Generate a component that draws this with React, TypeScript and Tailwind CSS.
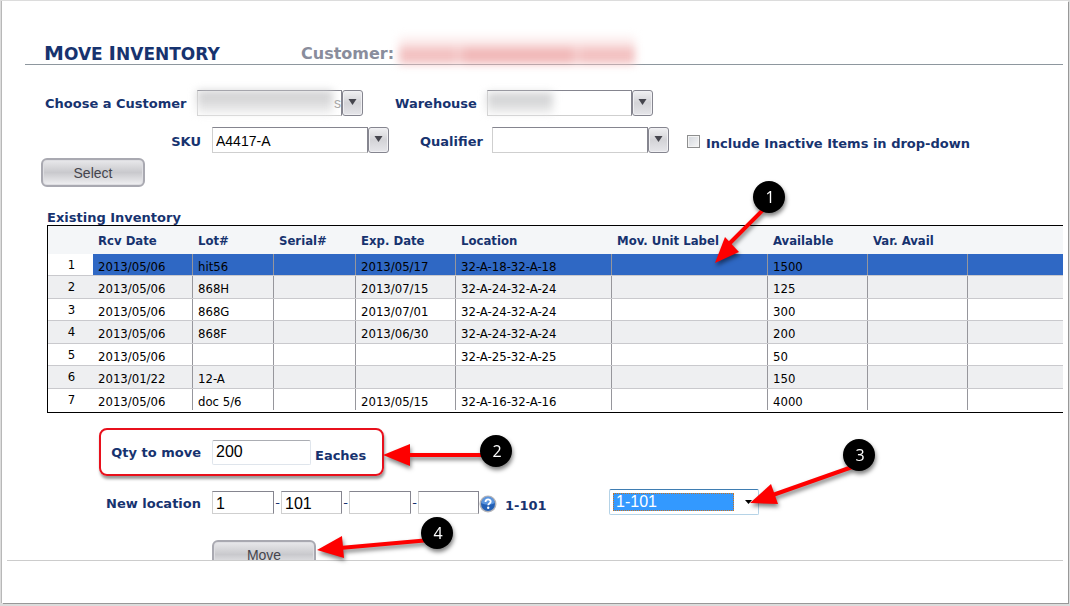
import type { ReactNode } from "react";

const columns = [
    { title: "", width: "w-[45px]" },
    { title: "Rcv Date", width: "w-[100px]" },
    { title: "Lot#", width: "w-[81px]" },
    { title: "Serial#", width: "w-[82px]" },
    { title: "Exp. Date", width: "w-[100px]" },
    { title: "Location", width: "w-[156px]" },
    { title: "Mov. Unit Label", width: "w-[156px]" },
    { title: "Available", width: "w-[100px]" },
    { title: "Var. Avail", width: "w-[100px]" },
    { title: "", width: "" },
];

// received, lot, serial, expires, location, label, available, variance
const inventory = [
    ["2013/05/06", "hit56", "", "2013/05/17", "32-A-18-32-A-18", "", "1500", ""],
    ["2013/05/06", "868H", "", "2013/07/15", "32-A-24-32-A-24", "", "125", ""],
    ["2013/05/06", "868G", "", "2013/07/01", "32-A-24-32-A-24", "", "300", ""],
    ["2013/05/06", "868F", "", "2013/06/30", "32-A-24-32-A-24", "", "200", ""],
    ["2013/05/06", "", "", "", "32-A-25-32-A-25", "", "50", ""],
    ["2013/01/22", "12-A", "", "", "", "", "150", ""],
    ["2013/05/06", "doc 5/6", "", "2013/05/15", "32-A-16-32-A-16", "", "4000", ""],
];

function Combo({
    id,
    value = "",
    width,
    children,
}: {
    id: string;
    value?: string;
    width: string;
    children?: ReactNode;
}) {
    return (
        <div className="relative flex h-[26px]">
            <input
                id={id}
                defaultValue={value}
                className={`${width} h-[26px] border border-t-[#85858f] border-r-[#85858f] border-b-[#cfcfcf] border-l-[#cfcfcf] bg-white px-[3px] pt-[2px] font-['Liberation_Sans',sans-serif] text-sm font-normal text-black outline-none`}
            />
            <button
                type="button"
                aria-label="Open list"
                className="flex h-[26px] w-[21px] items-center justify-center rounded-[3px] border border-[#85858f] bg-linear-to-b from-[#f0f0f2] via-[#d3d3d7] to-[#e6e6ea] pb-[2px] shadow-[inset_0_0_0_1px_#f0f0f3]"
            >
                <svg width="9" height="6" viewBox="0 0 9 6">
                    <path d="M0.500 0h8L4.500 6z" fill="#45454d" />
                </svg>
            </button>
            {children}
        </div>
    );
}

function GlossButton({ children }: { children: ReactNode }) {
    return (
        <button
            type="button"
            className="h-[29px] w-[104px] shrink-0 rounded-md border-2 border-[#a9a9b1] bg-linear-to-b from-[#e9e9ec] via-[#c9c9cd] to-[#f1f1f3] font-['Liberation_Sans',sans-serif] text-sm leading-6 font-normal text-[#45454d] shadow-[inset_0_0_0_1px_#dedee2]"
        >
            {children}
        </button>
    );
}

function InventoryTable() {
    return (
        <table
            aria-labelledby="existing"
            className="w-full table-fixed border-collapse font-['DejaVu_Sans_Condensed','DejaVu_Sans',sans-serif] text-[13px] leading-4 font-normal"
        >
            <thead>
                <tr className="h-7 bg-[#f4f6f8] text-left text-[#17336f]">
                    {columns.map((column, i) => (
                        <th key={i} className={`${column.width} p-0 pt-[2px] pl-[5px] font-bold whitespace-nowrap`}>
                            {column.title}
                        </th>
                    ))}
                </tr>
            </thead>
            <tbody>
                {inventory.map((row, i) => (
                    <tr
                        key={row.join()}
                        className={`${i % 2 ? "h-[23px] bg-[#eeeff1]" : "h-[22px] bg-white"} text-black`}
                        style={{ boxShadow: i < 6 ? "inset 0 -1px 0 #c9c9cd" : undefined }}
                    >
                        <td className="p-0 pt-[3px] pl-[2px] text-center align-top">{i + 1}</td>
                        {[...row, ""].map((cell, j) => (
                            <td
                                key={j}
                                className={`p-0 pt-[5px] pl-[5px] align-top whitespace-nowrap ${j < 8 ? "bg-[linear-gradient(#96969c,#96969c)] bg-size-[1px_calc(100%-1px)] bg-right-top bg-no-repeat" : ""} ${i === 0 ? "bg-[#2f68c4] shadow-[inset_0_-1px_0_#c9c9cd]" : ""}`}
                            >
                                {cell}
                            </td>
                        ))}
                    </tr>
                ))}
            </tbody>
        </table>
    );
}

function HelpIcon() {
    return (
        <svg width="18" height="18" viewBox="0 0 18 18" aria-label="Help" role="img">
            <circle cx="9" cy="9" r="8.500" fill="#b4b4b8" />
            <circle cx="9" cy="9" r="7" fill="#2460b5" />
            <path d="M2.500 8a6.500 6.500 0 0 1 13 0c-3 2-10 2-13 0z" fill="#5c96df" />
            <path d="M6.500 7c0-3.500 5.200-3.300 5.200-.4 0 1.900-2.500 1.900-2.500 3.600" fill="none" stroke="#fff" strokeWidth="1.800" />
            <circle cx="9.200" cy="12.700" r="1.200" fill="#fff" />
        </svg>
    );
}

const callouts = [
    { n: 1, x: 769, y: 197, line: "M769 204L727 246", head: "715,263 725,237 739,252" },
    { n: 2, x: 496, y: 451, line: "M490 455L405 455", head: "383,455 410,444 410,466" },
    { n: 3, x: 859, y: 455, line: "M855 466L770 496", head: "750,503 771,484 778,504" },
    { n: 4, x: 437, y: 533, line: "M430 540L340 548", head: "317,550 342,536 344,558" },
];

function Callouts() {
    return (
        <svg
            width="1070"
            height="606"
            className="pointer-events-none absolute top-0 left-0 drop-shadow-[1px_3px_2px_rgba(0,0,0,0.5)]"
        >
            {callouts.map((c) => (
                <g key={c.n}>
                    <path d={c.line} stroke="#fe0000" strokeWidth="4" />
                    <polygon points={c.head} fill="#fe0000" />
                    <circle cx={c.x} cy={c.y} r="16" fill="#000" />
                    <text x={c.x + 1} y={c.y + 6} textAnchor="middle" fill="#fff" className="font-['Open_Sans',sans-serif] text-base font-normal">
                        {c.n}
                    </text>
                </g>
            ))}
        </svg>
    );
}

const locationInput =
    "h-[23px] border border-t-[#85858f] border-r-[#85858f] border-b-[#cfcfcf] border-l-[#cfcfcf] bg-white px-[3px] pt-[2px] font-['Liberation_Sans',sans-serif] text-base text-black";

function App() {
    return (
        <div className="relative min-h-screen overflow-hidden bg-[#dcdcdc] pt-px pr-[2px] pb-[3px] pl-[2px] font-['DejaVu_Sans',sans-serif] text-[13px] leading-4 font-bold text-[#17336f]">
            <div className="min-h-[602px] bg-white pt-px pr-[5px] shadow-[-1px_0_0_#b8b8b8,1px_1px_0_#989898]">
                <header className="ml-[23px] flex h-[63px] items-end border-b border-[#8e979e]">
                    <h1 className="w-[276px] pl-[19px] text-[17px] leading-5 whitespace-nowrap uppercase">
                        <span className="text-xl leading-5">M</span>ove <span className="text-xl leading-5">I</span>nventory
                    </h1>
                    <span className="w-[98px] text-base leading-5 whitespace-nowrap text-[#898d9c]">Customer:</span>
                    <span aria-hidden="true" className="flex h-[27px] w-[236px] items-end bg-[#fcecec] blur-xs">
                        <span className="h-[17px] w-[56px] bg-[#f3c2c2]" />
                        <span className="h-[17px] w-[8px] bg-[#f5cccc]" />
                        <span className="h-[17px] w-[110px] bg-[#f1b9b9]" />
                        <span className="h-[17px] w-[8px] bg-[#f5cccc]" />
                        <span className="h-[17px] w-[54px] bg-[#f3c2c2]" />
                    </span>
                </header>

                <form>
                    <div className="mt-[25px] ml-[43px] flex items-center">
                        <label htmlFor="customer" className="w-[152px] pt-[2px] whitespace-nowrap">
                            Choose a Customer
                        </label>
                        <Combo id="customer" width="w-[145px]">
                            <span className="absolute top-px left-0 h-[23px] w-[136px] bg-linear-to-b from-[#c8c8ca] to-[#f2f2f2] blur-xs" />
                            <span className="absolute top-[5px] left-[137px] font-['Liberation_Sans',sans-serif] text-sm leading-4 font-normal text-[#a8a8a8]">
                                s
                            </span>
                        </Combo>
                        <label htmlFor="warehouse" className="ml-8 w-[92px] pt-[2px]">
                            Warehouse
                        </label>
                        <Combo id="warehouse" width="w-[145px]">
                            <span className="absolute top-[3px] left-0 h-5 w-[66px] bg-linear-to-b from-[#c9cacc] to-[#ececec] blur-xs" />
                        </Combo>
                    </div>

                    <div className="mt-[11px] ml-[43px] flex items-center">
                        <label htmlFor="sku" className="w-[167px] pt-[4px] pr-[11px] text-right">
                            SKU
                        </label>
                        <Combo id="sku" value="A4417-A" width="w-[156px]" />
                        <label htmlFor="qualifier" className="ml-[31px] w-[72px] pt-[4px]">
                            Qualifier
                        </label>
                        <Combo id="qualifier" width="w-[156px]" />
                        <div className="flex items-start pt-[7px] pl-[18px]">
                            <input
                                id="inactive"
                                type="checkbox"
                                className="size-[13px] appearance-none border border-[#8e8f8f] bg-linear-to-br from-[#d3d7dd] to-[#f6f6f6] shadow-[inset_0_0_0_1px_#f4f4f4] checked:bg-[#2f68c4]"
                            />
                            <label htmlFor="inactive" className="pt-px pl-[6px] whitespace-nowrap">
                                Include Inactive Items in drop-down
                            </label>
                        </div>
                    </div>

                    <div className="mt-[5px] ml-[39px] flex">
                        <GlossButton>Select</GlossButton>
                    </div>

                    <section className="ml-[45px]">
                        <h2 id="existing" className="pt-[23px] leading-[15px]">
                            Existing Inventory
                        </h2>
                        <div className="border border-r-0 border-black pb-px">
                            <InventoryTable />
                        </div>
                    </section>

                    <div className="mt-[15px] ml-[97px] flex h-[48px] w-[285px] items-center rounded-lg border-2 border-[#e8101c] shadow-[1px_3px_3px_rgba(0,0,0,0.4)]">
                        <label htmlFor="qty" className="w-[111px] pt-[2px] pr-[11px] text-right whitespace-nowrap">
                            Qty to move
                        </label>
                        <input
                            id="qty"
                            defaultValue="200"
                            className="h-[25px] w-[99px] rounded-xs border border-[#dfe5ec] border-t-[#abadb3] bg-white px-[3px] font-['Liberation_Sans',sans-serif] text-base font-normal text-black"
                        />
                        <span className="pt-[7px] pl-[4px]">Eaches</span>
                    </div>

                    <div className="mt-[13px] ml-[97px] flex h-[26px] items-center">
                        <label htmlFor="aisle" className="w-[113px] pt-[3px] pr-[11px] text-right whitespace-nowrap">
                            New location
                        </label>
                        <div className="flex items-center pt-px font-normal">
                            <input id="aisle" defaultValue="1" className={`${locationInput} w-[62px]`} />
                            <span className="w-[7px] text-center">-</span>
                            <input aria-label="Bay" defaultValue="101" className={`${locationInput} w-[61px]`} />
                            <span className="w-[7px] text-center">-</span>
                            <input aria-label="Level" className={`${locationInput} w-[62px]`} />
                            <span className="w-[7px] text-center">-</span>
                            <input aria-label="Position" className={`${locationInput} w-[61px]`} />
                        </div>
                        <div className="flex w-[130px] items-center pt-[4px]">
                            <HelpIcon />
                            <span className="pt-[3px] pl-2">1-101</span>
                        </div>
                        <div className="flex h-[26px] w-[150px] items-center rounded-xs border border-[#b5d3e7] border-t-[#3f7db2] pl-[3px]">
                            <select
                                aria-label="Location"
                                className="h-[18px] w-[121px] appearance-none border border-dotted border-[#c9731e] bg-[#3399ff] px-[2px] font-['Liberation_Sans',sans-serif] text-base leading-4 font-normal text-white"
                            >
                                <option>1-101</option>
                            </select>
                            <svg width="7" height="4" viewBox="0 0 7 4" className="ml-[11px]">
                                <path d="M0 0h7L3.500 4z" fill="#000" />
                            </svg>
                        </div>
                    </div>

                    <div className="ml-[5px] flex h-[46px] overflow-hidden border-b border-[#cccccc] pt-[25px] pl-[205px]">
                        <GlossButton>Move</GlossButton>
                    </div>
                </form>
            </div>
            <Callouts />
        </div>
    );
}

export default App;
